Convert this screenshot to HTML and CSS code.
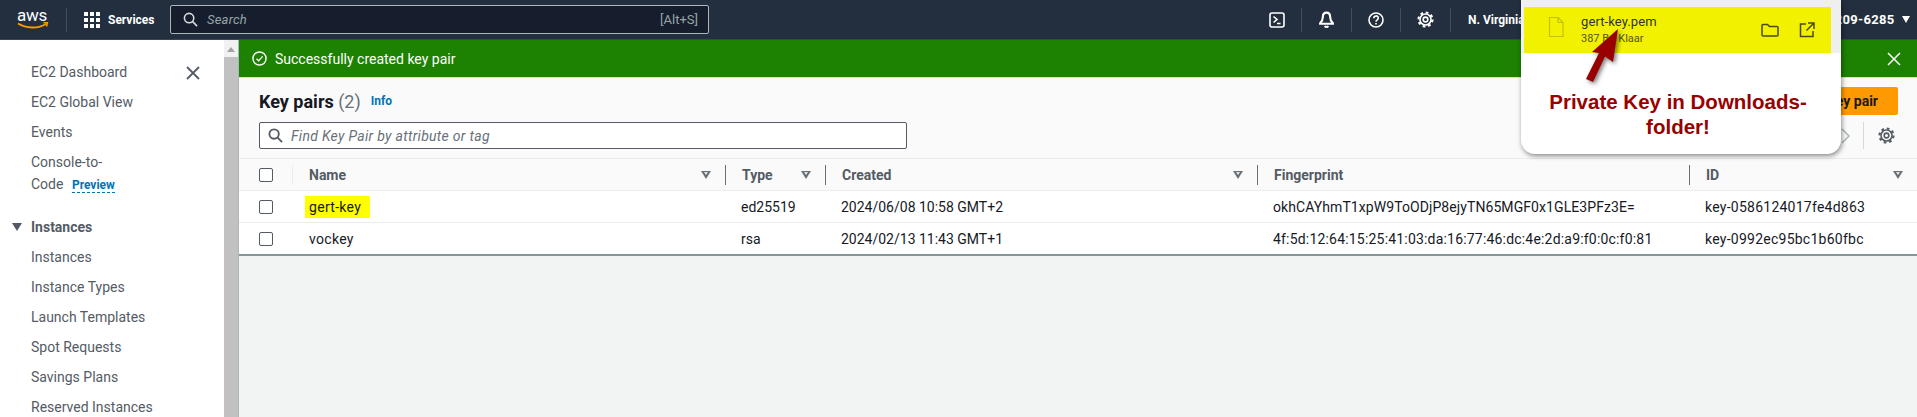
FILE: index.html
```html
<!DOCTYPE html>
<html lang="en">
<head>
  <meta charset="UTF-8">
  <title>Key pairs | EC2</title>
  <link rel="stylesheet" href="styles.css">
</head>
<body>
  <!-- Top navigation -->
  <header class="topbar">
    <div class="aws-logo">
      <span class="aws-word">aws</span>
      <svg viewBox="0 0 32 8" width="32" height="8" fill="none" stroke="#ff9900">
        <path d="M1 1.500c8 5 20 5.500 28 .5" stroke-width="1.800"/>
        <path d="M26.500 .8l4-.3-1 4" stroke-width="1.500"/>
      </svg>
    </div>
    <span class="top-sep first"></span>
    <svg class="grid-icon" viewBox="0 0 16 16" width="16" height="16" fill="#fff">
      <rect x="0" y="0" width="4" height="4"/><rect x="6" y="0" width="4" height="4"/><rect x="12" y="0" width="4" height="4"/>
      <rect x="0" y="6" width="4" height="4"/><rect x="6" y="6" width="4" height="4"/><rect x="12" y="6" width="4" height="4"/>
      <rect x="0" y="12" width="4" height="4"/><rect x="6" y="12" width="4" height="4"/><rect x="12" y="12" width="4" height="4"/>
    </svg>
    <span class="services">Services</span>
    <div class="top-search">
      <svg viewBox="0 0 16 16" width="15" height="15" fill="none" stroke="#d5dbdb" stroke-width="1.700"><circle cx="6.500" cy="6.500" r="5"/><path d="M10.300 10.300L15 15"/></svg>
      <span class="top-search-text">Search</span>
      <span class="shortcut">[Alt+S]</span>
    </div>
    <div class="top-tools">
      <svg viewBox="0 0 16 16" width="16" height="16" fill="none" stroke="#fff" stroke-width="1.600"><rect x="1" y="1" width="14" height="14" rx="2"/><path d="M4.500 4.500L8 7.500 4.500 10.500M8 11.500h3.500"/></svg>
      <span class="top-sep"></span>
      <svg viewBox="0 0 16 16" width="17" height="17" fill="none" stroke="#fff" stroke-width="2"><path d="M8 1.500c-2.500 0-3.500 2-3.500 4.500 0 2.500-1 4-2.500 5.500v.5h12v-.5c-1.500-1.500-2.500-3-2.500-5.500S10.500 1.500 8 1.500zM6.500 14a1.600 1.600 0 003 0"/></svg>
      <span class="top-sep"></span>
      <svg viewBox="0 0 16 16" width="16" height="16" fill="none" stroke="#fff" stroke-width="1.600"><circle cx="8" cy="8" r="7"/><path d="M5.800 6.200c0-3 4.500-3 4.500-.2 0 1.800-2.300 1.800-2.300 3.700"/><path d="M8 11v1.600"/></svg>
      <span class="top-sep"></span>
      <svg viewBox="0 0 16 16" width="17" height="17" fill="none" stroke="#fff"><circle cx="8" cy="8" r="2.200" stroke-width="1.500"/><circle cx="8" cy="8" r="5.200" stroke-width="1.500"/><circle cx="8" cy="8" r="6.600" stroke-width="2" stroke-dasharray="2.600 2.584"/></svg>
      <span class="top-sep"></span>
      <span class="region">N. Virginia</span>
      <span class="account">0209-6285</span>
      <span class="caret"></span>
    </div>
  </header>

  <div class="layout">
    <!-- Side navigation -->
    <nav class="sidenav">
      <svg class="nav-close" viewBox="0 0 14 14" width="14" height="14" fill="none" stroke="#545b64" stroke-width="1.800"><path d="M1 1l12 12M13 1L1 13"/></svg>
      <ul class="nav-list">
        <li>EC2 Dashboard</li>
        <li>EC2 Global View</li>
        <li>Events</li>
        <li class="nav-wrap">Console-to-<br>Code <span class="preview">Preview</span></li>
      </ul>
      <h3 class="nav-head"><span class="nav-arrow"></span>Instances</h3>
      <ul class="nav-list">
        <li>Instances</li>
        <li>Instance Types</li>
        <li>Launch Templates</li>
        <li>Spot Requests</li>
        <li>Savings Plans</li>
        <li>Reserved Instances</li>
      </ul>
    </nav>
    <div class="scrollbar">
      <span class="scroll-up"></span>
      <div class="scroll-thumb"></div>
    </div>

    <main class="content">
      <div class="flash">
        <svg viewBox="0 0 16 16" width="15" height="15" fill="none" stroke="#fff" stroke-width="1.500"><circle cx="8" cy="8" r="7"/><path d="M4.800 8.200l2.300 2.300 4.200-4.800"/></svg>
        <span class="flash-text">Successfully created key pair</span>
        <svg class="flash-close" viewBox="0 0 14 14" width="14" height="14" fill="none" stroke="#fff" stroke-width="1.500"><path d="M1 1l12 12M13 1L1 13"/></svg>
      </div>

      <section class="panel">
        <div class="panel-head">
          <div class="title-row">
            <h1>Key pairs <span class="count">(2)</span></h1>
            <a class="info">Info</a>
            <button class="create-btn">Create key pair</button>
          </div>
          <div class="filter-row">
            <div class="filter">
              <svg viewBox="0 0 16 16" width="15" height="15" fill="none" stroke="#545b64" stroke-width="2"><circle cx="6.500" cy="6.500" r="5"/><path d="M10.300 10.300L15 15"/></svg>
              <span>Find Key Pair by attribute or tag</span>
            </div>
            <svg class="pager-next" viewBox="0 0 10 16" width="10" height="16" fill="none" stroke="#aab7b8" stroke-width="1.500"><path d="M1 1l7 7-7 7"/></svg>
            <span class="filter-sep"></span>
            <svg class="prefs" viewBox="0 0 16 16" width="17" height="17" fill="none" stroke="#545b64"><circle cx="8" cy="8" r="2.200" stroke-width="1.500"/><circle cx="8" cy="8" r="5.200" stroke-width="1.500"/><circle cx="8" cy="8" r="6.600" stroke-width="2" stroke-dasharray="2.600 2.584"/></svg>
          </div>
        </div>

        <div class="row row-head">
          <div class="cell check"><span class="checkbox"></span></div>
          <div class="cell">Name<span class="sort"></span></div>
          <div class="cell">Type<span class="sort"></span></div>
          <div class="cell">Created<span class="sort"></span></div>
          <div class="cell">Fingerprint</div>
          <div class="cell">ID<span class="sort"></span></div>
        </div>
        <div class="row">
          <div class="cell check"><span class="checkbox"></span></div>
          <div class="cell name"><span class="marked">gert-key</span></div>
          <div class="cell">ed25519</div>
          <div class="cell">2024/06/08 10:58 GMT+2</div>
          <div class="cell code-a">okhCAYhmT1xpW9ToODjP8ejyTN65MGF0x1GLE3PFz3E=</div>
          <div class="cell code-b">key-0586124017fe4d863</div>
        </div>
        <div class="row row-last">
          <div class="cell check"><span class="checkbox"></span></div>
          <div class="cell name">vockey</div>
          <div class="cell">rsa</div>
          <div class="cell">2024/02/13 11:43 GMT+1</div>
          <div class="cell code-c">4f:5d:12:64:15:25:41:03:da:16:77:46:dc:4e:2d:a9:f0:0c:f0:81</div>
          <div class="cell code-b">key-0992ec95bc1b60fbc</div>
        </div>
      </section>
    </main>
  </div>

  <!-- Browser downloads popup pasted over the console -->
  <aside class="downloads">
    <div class="dl-band">
      <div class="dl-item">
        <svg class="dl-file" viewBox="0 0 16 20" width="16" height="20" fill="none" stroke="#c4c000" stroke-width="1.200"><path d="M1.500.5h8.500l5 5v14h-13.500z"/><path d="M10 .5v5h5"/></svg>
        <div class="dl-text">
          <div class="dl-name">gert-key.pem</div>
          <div class="dl-size">387 B • Klaar</div>
        </div>
        <svg viewBox="0 0 18 14" width="18" height="14" fill="none" stroke="#4c4a00" stroke-width="1.500"><path d="M1 2.500a1 1 0 011-1h4.500l2 2H16a1 1 0 011 1V12a1 1 0 01-1 1H2a1 1 0 01-1-1z"/></svg>
        <svg viewBox="0 0 16 16" width="16" height="16" fill="none" stroke="#4c4a00" stroke-width="1.500"><path d="M7 2H1.500v12.500H14V9M9 1h6v6M15 1L7.500 8.500"/></svg>
      </div>
    </div>
    <p class="dl-note">Private Key in Downloads-<br>folder!</p>
  </aside>
  <svg class="note-arrow" viewBox="0 0 40 60" width="40" height="60">
    <polygon points="33,0 28,33 20,27.500 8,53 1,50 14,24 7,23" fill="#990000"/>
  </svg>
</body>
</html>
```

FILE: styles.css
```css
* {
  box-sizing: border-box;
}
body {
  margin: 0;
  height: 417px;
  overflow: hidden;
  font-family: Roboto, "Noto Sans", sans-serif;
  font-size: 14px;
  color: #16191f;
  background-color: #f2f3f3;
}
ul {
  list-style-type: none;
  margin: 0;
  padding: 0;
}

/* top bar */
.topbar {
  display: flex;
  align-items: center;
  height: 40px;
  padding-left: 17px;
  background-color: #232f3e;
  border-bottom: 1px solid #3b4654;
  color: #fff;
}
.aws-logo {
  display: flex;
  flex: none;
  flex-direction: column;
  width: 32px;
}
.aws-logo svg {
  display: block;
}
.aws-word {
  height: 13px;
  font-size: 17px;
  line-height: 12px;
  letter-spacing: -0.2px;
}
.top-sep {
  flex: none;
  width: 1px;
  height: 24px;
  background-color: #414d5c;
}
.top-sep.first {
  margin: 0 17px;
}
.services {
  margin-left: 8px;
  font-size: 12px;
  font-weight: 700;
  width: 62px;
}
.top-search {
  display: flex;
  align-items: center;
  width: 539px;
  height: 29px;
  padding: 0 10px 0 12px;
  background-color: #161e2d;
  border: 1px solid #aab7b8;
  border-radius: 2px;
}
.top-search-text {
  margin-left: 9px;
  font-style: italic;
  font-size: 13px;
  letter-spacing: 0.2px;
  color: #95a5a6;
}
.shortcut {
  margin-left: auto;
  font-size: 13px;
  color: #95a5a6;
}
.top-tools {
  display: flex;
  align-items: center;
  gap: 16px;
  margin-left: 560px;
}
.region {
  font-size: 12px;
  font-weight: 700;
  width: 373px;
  margin-left: 1px;
}
.account {
  font-size: 13px;
  font-weight: 700;
  letter-spacing: 0.3px;
  margin-left: -30px;
}
.caret {
  width: 0;
  height: 0;
  margin-left: -9px;
  border-left: 4px solid transparent;
  border-right: 4px solid transparent;
  border-top: 7px solid #fff;
}

/* page layout */
.layout {
  display: flex;
  height: 377px;
}
.sidenav {
  position: relative;
  flex: none;
  width: 224px;
  padding: 17px 0 0 31px;
  background-color: #fff;
  color: #545b64;
}
.nav-list li {
  height: 30px;
  line-height: 30px;
  white-space: nowrap;
}
.nav-list li.nav-wrap {
  height: 52px;
  line-height: 22px;
  padding-top: 4px;
}
.nav-close {
  position: absolute;
  left: 186px;
  top: 26px;
}
.preview {
  margin-left: 5px;
  font-size: 12px;
  font-weight: 700;
  color: #0073bb;
  border-bottom: 1px dashed #0073bb;
}
.nav-head {
  display: flex;
  align-items: center;
  height: 30px;
  margin: 13px 0 0 -19px;
  font-size: 14px;
  font-weight: 700;
}
.nav-arrow {
  width: 0;
  height: 0;
  margin-right: 9px;
  border-left: 5px solid transparent;
  border-right: 5px solid transparent;
  border-top: 8px solid #545b64;
}
.scrollbar {
  flex: none;
  display: flex;
  flex-direction: column;
  align-items: center;
  width: 15px;
  background-color: #f1f1f1;
  border-right: 1px solid #aab7b8;
}
.scroll-up {
  width: 0;
  height: 0;
  margin: 7px 0 5px;
  border-left: 4px solid transparent;
  border-right: 4px solid transparent;
  border-bottom: 5px solid #a3a3a3;
}
.scroll-thumb {
  flex: 1;
  align-self: stretch;
  background-color: #c1c1c1;
}
.content {
  flex: 1;
  min-width: 0;
}

/* flash message */
.flash {
  display: flex;
  align-items: center;
  height: 37px;
  padding: 0 16px 0 13px;
  background-color: #1d8102;
  color: #fff;
}
.flash-text {
  margin-left: 8px;
}
.flash-close {
  margin-left: auto;
}

/* key pairs table */
.panel {
  background-color: #fff;
}
.panel-head {
  height: 82px;
  padding: 9px 19px 0 20px;
  background-color: #fafafa;
  border-top: 1px solid #d5dbdb;
  border-bottom: 1px solid #eaeded;
}
.title-row {
  display: flex;
  align-items: center;
  height: 28px;
}
h1 {
  margin: 0;
  font-size: 18px;
  font-weight: 700;
}
.count {
  font-weight: 400;
  color: #687078;
}
.info {
  margin-left: 10px;
  font-size: 12px;
  font-weight: 700;
  color: #0073bb;
}
.create-btn {
  margin-left: auto;
  width: 160px;
  height: 28px;
  padding: 0 20px 0 0;
  text-align: right;
  background-color: #ff9900;
  border: none;
  border-radius: 2px;
  font-family: inherit;
  font-size: 14px;
  font-weight: 700;
  color: #16191f;
}
.filter-row {
  display: flex;
  align-items: center;
  height: 27px;
  margin-top: 7px;
}
.filter {
  display: flex;
  align-items: center;
  gap: 8px;
  width: 648px;
  height: 27px;
  padding-left: 8px;
  background-color: #fff;
  border: 1px solid #545b64;
  border-radius: 2px;
  font-style: italic;
  letter-spacing: 0.3px;
  color: #687078;
}
.pager-next {
  margin-left: auto;
}
.filter-sep {
  width: 1px;
  height: 27px;
  margin: 0 14px 0 12px;
  background-color: #d5dbdb;
}
.prefs {
  margin-right: 3px;
}
.row {
  display: grid;
  grid-template-columns: 53px 433px 100px 432px 432px 1fr;
  height: 32px;
  background-color: #fff;
  border-bottom: 1px solid #eaeded;
}
.row-head {
  height: 32px;
  background-color: #fafafa;
  color: #545b64;
  font-weight: 700;
}
.row-last {
  height: 33px;
  border-bottom: 2px solid #879596;
}
.cell {
  display: flex;
  align-items: center;
  position: relative;
  padding-left: 16px;
  white-space: nowrap;
}
.cell.name {
  padding-left: 17px;
  letter-spacing: 0.3px;
}
.code-a {
  letter-spacing: 0.08px;
}
.code-b {
  letter-spacing: 0.25px;
}
.code-c {
  letter-spacing: 0.19px;
}
.row-head .cell {
  padding-left: 17px;
}
.row-head .cell + .cell + .cell::before {
  content: "";
  position: absolute;
  left: 0;
  top: 6px;
  width: 1px;
  height: 20px;
  background-color: #687078;
}
.row-head .cell:nth-child(2)::before {
  content: "";
  position: absolute;
  left: 0;
  top: 6px;
  width: 1px;
  height: 20px;
  background-color: #eaeded;
}
.cell.check {
  padding-left: 20px;
}
.checkbox {
  width: 14px;
  height: 14px;
  background-color: #fff;
  border: 1px solid #545b64;
  border-radius: 2px;
}
.sort {
  position: absolute;
  right: 14px;
  top: 12px;
  width: 0;
  height: 0;
  border-left: 5px solid transparent;
  border-right: 5px solid transparent;
  border-top: 8px solid #687078;
}
.sort::after {
  content: "";
  position: absolute;
  left: -2px;
  top: -7px;
  width: 0;
  height: 0;
  border-left: 2px solid transparent;
  border-right: 2px solid transparent;
  border-top: 3px solid #e4e6e6;
}
.marked {
  margin-left: -4px;
  padding: 0 9px 0 4px;
  line-height: 22px;
  background-color: #ffff00;
}

/* downloads popup */
.downloads {
  position: absolute;
  left: 1521px;
  top: 0;
  width: 320px;
  height: 154px;
  background-color: #fff;
  border-radius: 0 0 14px 14px;
  box-shadow: 1px 2px 5px rgba(0, 0, 0, 0.45);
}
.dl-band {
  height: 53px;
  padding: 7px 10px 0 3px;
  background-color: #efefef;
}
.dl-item {
  display: flex;
  align-items: center;
  height: 46px;
  padding: 0 16px 0 24px;
  gap: 20px;
  background-color: #f2f200;
  color: #333;
}
.dl-file {
  margin-top: -7px;
}
.dl-text {
  flex: 1;
  margin-left: -3px;
}
.dl-name {
  font-size: 13px;
  letter-spacing: 0.1px;
  line-height: 18px;
}
.dl-size {
  font-size: 11px;
  line-height: 16px;
  color: #55550a;
}
.dl-note {
  margin: 36px 0 0;
  padding-right: 6px;
  font-family: "Liberation Sans", Arial, sans-serif;
  font-size: 20.500px;
  font-weight: 700;
  line-height: 25px;
  text-align: center;
  color: #990000;
}
.note-arrow {
  position: absolute;
  left: 1585px;
  top: 29px;
  filter: drop-shadow(2px 2px 2px rgba(0, 0, 0, 0.5));
}
```
